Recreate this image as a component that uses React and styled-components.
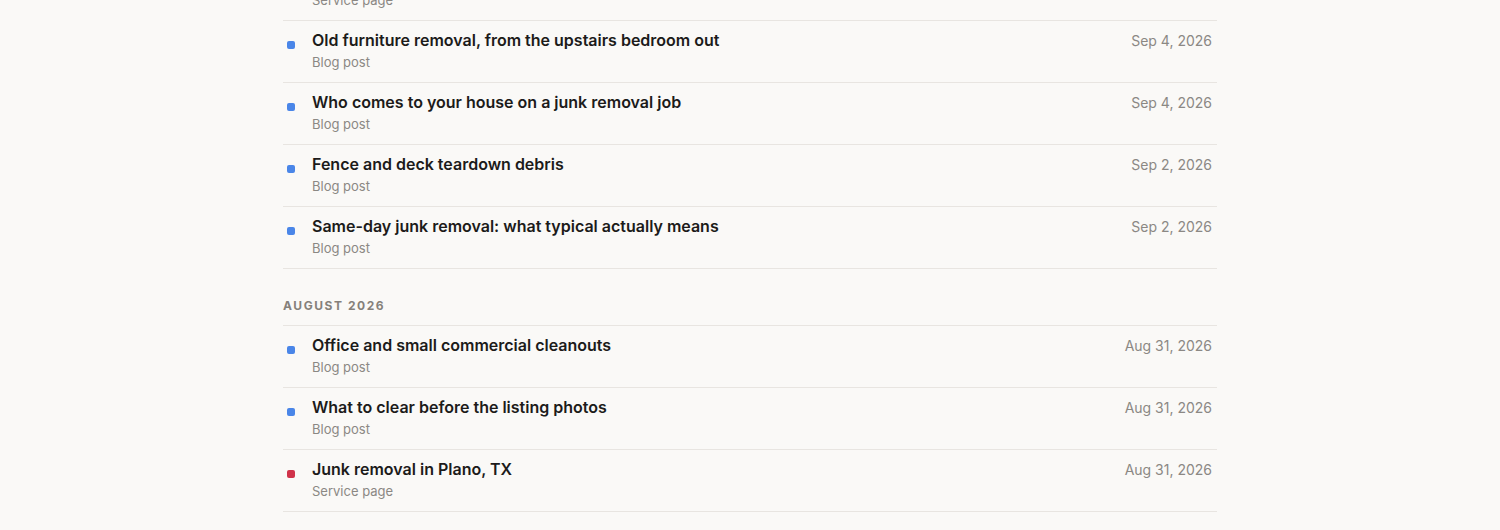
import React from 'react';
import styled, { createGlobalStyle } from 'styled-components';

const GlobalStyle = createGlobalStyle`
  html, body {
    margin: 0;
    padding: 0;
    background: #faf9f7;
    overflow: hidden;
  }
  body {
    font-family: Inter, "Noto Sans", "Liberation Sans", sans-serif;
    -webkit-font-smoothing: antialiased;
  }
`;

// the list is scrolled a little: the row above the first visible border peeks in
const Page = styled.main`
  width: 934px;
  margin: -41px auto 0;
`;

const Group = styled.section``;

const GroupHeading = styled.h2`
  margin: 0;
  padding: 29px 0 11px;
  font-size: 12px;
  line-height: 16px;
  font-weight: 700;
  letter-spacing: 0.13em;
  text-transform: uppercase;
  color: #85807a;
`;

const List = styled.ul`
  list-style: none;
  margin: 0;
  padding: 0;
`;

const Row = styled.li`
  display: grid;
  grid-template-columns: 8px 1fr auto;
  column-gap: 17px;
  align-items: start;
  padding: 7px 5px 10px 4px;
  border-bottom: 1px solid #e8e5e1;

  ${GroupHeading} + ${List} > &:first-child {
    border-top: 1px solid #e8e5e1;
  }
`;

const Dot = styled.span`
  width: 8px;
  height: 8px;
  margin-top: 13px;
  border-radius: 2px;
  background: ${({ $kind }) => ($kind === 'service' ? '#d0334a' : '#4a86e8')};
`;

const Body = styled.div`
  min-width: 0;
`;

const Title = styled.div`
  font-size: 16px;
  line-height: 24px;
  font-weight: 600;
  color: #1c1b1a;
`;

const Kind = styled.div`
  font-size: 13px;
  line-height: 20px;
  color: #8b8884;
`;

const Date = styled.div`
  margin-top: 1px;
  font-size: 14px;
  line-height: 24px;
  color: #8b8884;
  white-space: nowrap;
`;

const kindLabel = { blog: 'Blog post', service: 'Service page' };

const groups = [
  {
    month: 'September 2026',
    hideHeading: true,
    items: [
      { title: 'Junk removal in Frisco, TX', kind: 'service', date: 'Sep 5, 2026' },
      { title: 'Old furniture removal, from the upstairs bedroom out', kind: 'blog', date: 'Sep 4, 2026' },
      { title: 'Who comes to your house on a junk removal job', kind: 'blog', date: 'Sep 4, 2026' },
      { title: 'Fence and deck teardown debris', kind: 'blog', date: 'Sep 2, 2026' },
      { title: 'Same-day junk removal: what typical actually means', kind: 'blog', date: 'Sep 2, 2026' },
    ],
  },
  {
    month: 'August 2026',
    items: [
      { title: 'Office and small commercial cleanouts', kind: 'blog', date: 'Aug 31, 2026' },
      { title: 'What to clear before the listing photos', kind: 'blog', date: 'Aug 31, 2026' },
      { title: 'Junk removal in Plano, TX', kind: 'service', date: 'Aug 31, 2026' },
    ],
  },
];

const App = () => (
  <>
    <GlobalStyle />
    <Page>
      {groups.map((group) => (
        <Group key={group.month}>
          {!group.hideHeading && <GroupHeading>{group.month}</GroupHeading>}
          <List>
            {group.items.map((item) => (
              <Row key={item.title}>
                <Dot $kind={item.kind} />
                <Body>
                  <Title>{item.title}</Title>
                  <Kind>{kindLabel[item.kind]}</Kind>
                </Body>
                <Date>{item.date}</Date>
              </Row>
            ))}
          </List>
        </Group>
      ))}
    </Page>
  </>
);

export default App;
